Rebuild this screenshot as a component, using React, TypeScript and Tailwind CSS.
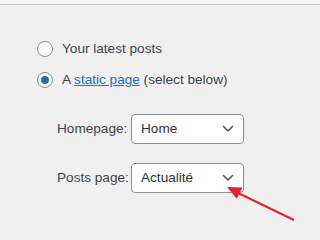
const Chevron = () => (
    <svg width="12" height="8" viewBox="0 0 12 8" fill="none">
        <path d="M1.5 1.5 L6 6 L10.5 1.5" stroke="#50575e" strokeWidth="1.6" strokeLinecap="round" strokeLinejoin="round" />
    </svg>
)

const Select = ({ value }: { value: string }) => (
    <div className="flex items-center justify-between w-[113px] h-[30px] bg-white border border-[#8c8f94] rounded-[4px] pl-[9px] pr-[9px] text-[#2c3338]">
        <span>{value}</span>
        <Chevron />
    </div>
)

const App = () => {
    return (
        <div className="relative w-[320px] h-[240px] overflow-hidden bg-[#f0f0f1] text-[#3c434a] text-[13.6px] font-['Liberation_Sans',Arial,sans-serif]">
            <div className="h-[5px] bg-[#f6f6f6] border-b border-[#c8c8c8]"></div>

            <div className="pl-[37px] mt-[33px] flex flex-col gap-[9px]">
                <label className="flex items-center h-[22px] gap-[9px]">
                    <span className="w-[16px] h-[16px] rounded-full border border-[#8c8f94] bg-white"></span>
                    <span>Your latest posts</span>
                </label>
                <label className="flex items-center h-[22px] gap-[9px]">
                    <span className="flex items-center justify-center w-[16px] h-[16px] rounded-full border border-[#8c8f94] bg-white">
                        <span className="w-[8px] h-[8px] rounded-full bg-[#2271b1]"></span>
                    </span>
                    <span>
                        A <a className="text-[#2271b1] underline">static page</a> (select below)
                    </span>
                </label>
            </div>

            <div className="ml-[57px] mt-[23px] grid grid-cols-[74px_113px] items-center gap-y-[19px]">
                <span>Homepage:</span>
                <Select value="Home" />
                <span>Posts page:</span>
                <Select value="Actualité" />
            </div>

            <svg className="absolute left-0 top-0" width="320" height="240" viewBox="0 0 320 240">
                <line x1="294" y1="220" x2="236" y2="192" stroke="#e5202e" strokeWidth="2" />
                <polygon points="227,187 242.5,187.6 236.8,198.8" fill="#e5202e" />
            </svg>
        </div>
    )
}

export default App
